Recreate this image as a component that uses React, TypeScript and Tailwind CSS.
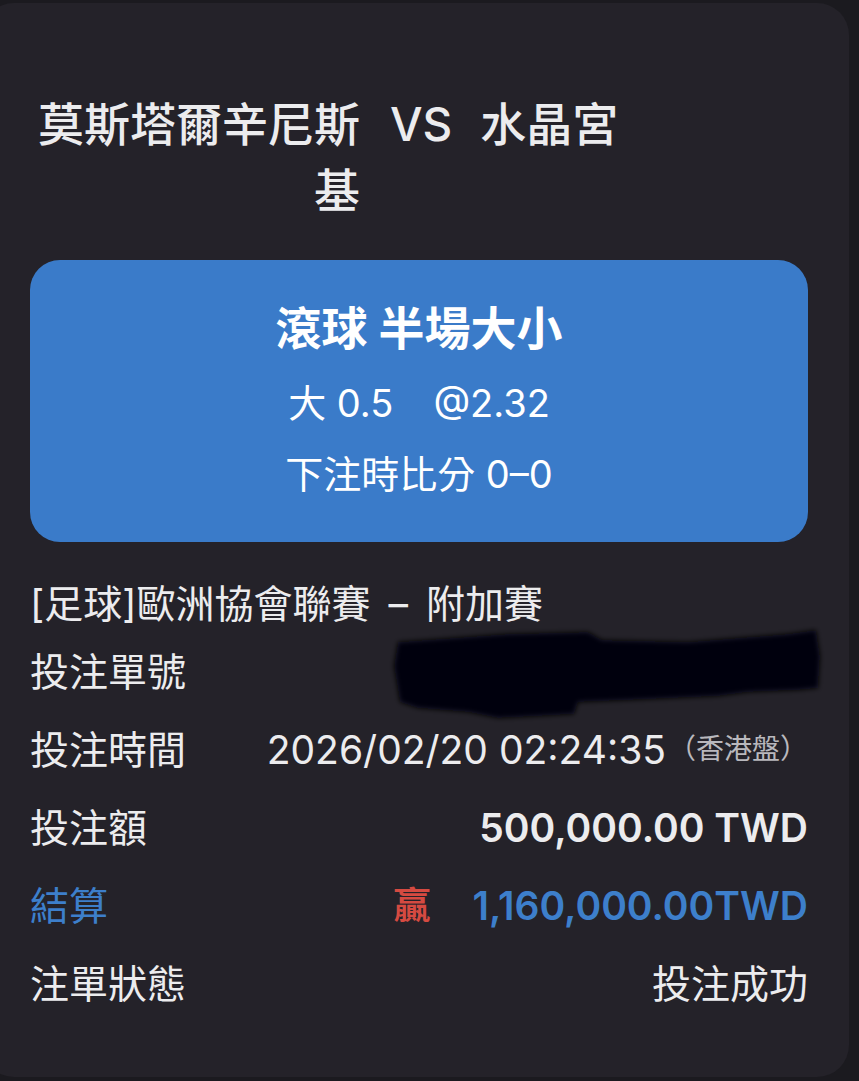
import React from "react";

const font = { fontFamily: 'Inter, "Noto Sans CJK TC", "Noto Sans CJK SC", sans-serif' };

function InfoRow({
    label,
    children,
    labelClass = "text-[#ececee]",
}: {
    label: string;
    children?: React.ReactNode;
    labelClass?: string;
}) {
    return (
        <div className="flex flex-row items-center justify-between h-[78px]">
            <span className={`text-[39px] leading-none ${labelClass}`}>{label}</span>
            <div className="flex flex-row items-center">{children}</div>
        </div>
    );
}

function Redaction() {
    return (
        <svg
            className="absolute left-[358px] top-[-6px] pointer-events-none"
            width="440"
            height="100"
            viewBox="0 0 440 100"
        >
            <defs>
                <filter id="blur" x="-10%" y="-20%" width="120%" height="140%">
                    <feGaussianBlur stdDeviation="2.5" />
                </filter>
            </defs>
            <path
                d="M10 16 L120 8 L200 6 L214 14 L300 16 L400 8 L428 4 L432 30 L430 62 L410 64 L360 66 L330 70 L240 74 L190 76 L186 88 L150 90 L110 92 L80 86 L30 82 L12 76 L6 40 Z"
                fill="#060409"
                filter="url(#blur)"
            />
        </svg>
    );
}

export default function App() {
    return (
        <div className="w-[859px] h-[1081px] overflow-hidden bg-[#1b1a1f] pt-[3px]" style={font}>
            <div className="ml-[-18px] w-[867px] h-[1074px] bg-[#242229] rounded-[32px] pl-[48px] pr-[41px] pt-[88px]">
                {/* teams */}
                <div className="flex flex-row items-start text-[46px] leading-[66px] font-medium text-[#ececee]">
                    <div className="w-[326px] ml-[4px] text-right">莫斯塔爾辛尼斯基</div>
                    <div className="ml-[30px]">VS</div>
                    <div className="ml-[28px]">水晶宮</div>
                </div>

                {/* bet card */}
                <div className="mt-[37px] h-[282px] rounded-[30px] bg-[#3a7bc9] flex flex-col items-center pt-[40px] text-white">
                    <div className="text-[46px] leading-[56px] font-bold">滾球 半場大小</div>
                    <div className="mt-[15px] flex flex-row gap-[40px] text-[38px] leading-[64px]">
                        <span>大 0.5</span>
                        <span>@2.32</span>
                    </div>
                    <div className="mt-[7px] text-[38px] leading-[64px]">下注時比分 0–0</div>
                </div>

                {/* details */}
                <div className="mt-[34px] text-[39px] leading-[56px] text-[#ececee]">
                    [足球]歐洲協會聯賽<span className="mx-[18px]">–</span>附加賽
                </div>
                <div className="relative">
                    <InfoRow label="投注單號" />
                    <Redaction />
                </div>
                <InfoRow label="投注時間">
                    <span className="text-[39px] text-[#ececee] leading-none">2026/02/20 02:24:35</span>
                    <span className="text-[28px] text-[#b9b8bd] leading-none ml-[2px]">（香港盤）</span>
                </InfoRow>
                <InfoRow label="投注額">
                    <span className="text-[39px] font-semibold text-[#ececee] leading-none">500,000.00 TWD</span>
                </InfoRow>
                <InfoRow label="結算" labelClass="text-[#3d7fcb]">
                    <span className="text-[37px] font-bold text-[#d54a41] leading-none">贏</span>
                    <span className="ml-[42px] text-[39px] font-semibold text-[#3d7fcb] leading-none">1,160,000.00TWD</span>
                </InfoRow>
                <InfoRow label="注單狀態">
                    <span className="text-[39px] text-[#ececee] leading-none">投注成功</span>
                </InfoRow>
            </div>
        </div>
    );
}
